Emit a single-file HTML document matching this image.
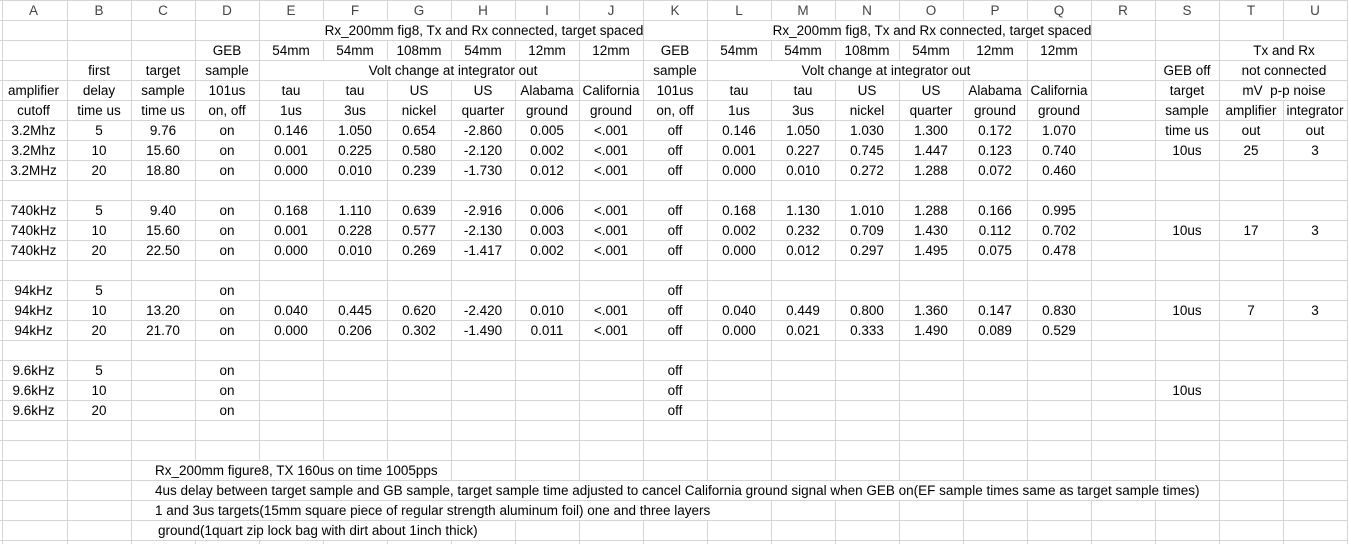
<!DOCTYPE html>
<html><head><meta charset="utf-8">
<style>
html,body{margin:0;padding:0;background:#fff;}
#s{position:relative;width:1351px;height:544px;overflow:hidden;font-family:"Liberation Sans",Arial,sans-serif;font-size:13.5px;color:#000;
background:
 linear-gradient(#fff,#fff) 1348px 0/10px 544px no-repeat,
 repeating-linear-gradient(to right,transparent 0 63px,#d4d4d4 63px 64px) 4px 0/1344px 544px no-repeat,
 repeating-linear-gradient(to bottom,#d4d4d4 0 1px,transparent 1px 20px) 0 0/1348px 544px no-repeat;}
.vl{position:absolute;left:2px;top:0;width:1px;height:544px;background:#d4d4d4}
.r{position:absolute;left:0;height:19px;line-height:20px;white-space:nowrap;display:flex}
.r i{font-style:normal;display:block;width:64px;text-align:center;flex:none}
.r i:first-child{width:67px}
.h i{color:#444}
.w{position:absolute;background:#fff;height:19px}
.t{position:absolute;line-height:20px;white-space:nowrap;height:19px}
</style></head><body><div id="s">
<div class="vl"></div>
<div class="w" style="left:322px;width:260px;top:21px"></div>
<div class="w" style="left:770px;width:260px;top:21px"></div>
<div class="w" style="left:1282px;width:3px;top:41px"></div>
<div class="w" style="left:322px;width:196px;top:61px"></div>
<div class="w" style="left:770px;width:196px;top:61px"></div>
<div class="w" style="left:1282px;width:3px;top:61px"></div>
<div class="w" style="left:1282px;width:3px;top:81px"></div>
<div class="w" style="left:133px;width:302px;top:461px"></div>
<div class="w" style="left:133px;width:1082px;top:481px"></div>
<div class="w" style="left:133px;width:596px;top:501px"></div>
<div class="w" style="left:133px;width:359px;top:521px"></div>

<div class="r h" style="top:1px"><i>A</i><i>B</i><i>C</i><i>D</i><i>E</i><i>F</i><i>G</i><i>H</i><i>I</i><i>J</i><i>K</i><i>L</i><i>M</i><i>N</i><i>O</i><i>P</i><i>Q</i><i>R</i><i>S</i><i>T</i><i>U</i></div>

<div class="t" style="left:324px;width:320px;text-align:center;top:21px">Rx_200mm fig8, Tx and Rx connected, target spaced</div>
<div class="t" style="left:772px;width:320px;text-align:center;top:21px">Rx_200mm fig8, Tx and Rx connected, target spaced</div>

<div class="r" style="top:41px"><i></i><i></i><i></i><i>GEB</i><i>54mm</i><i>54mm</i><i>108mm</i><i>54mm</i><i>12mm</i><i>12mm</i><i>GEB</i><i>54mm</i><i>54mm</i><i>108mm</i><i>54mm</i><i>12mm</i><i>12mm</i><i></i><i></i><i></i><i></i></div>
<div class="t" style="left:1220px;width:128px;text-align:center;top:41px">Tx and Rx</div>

<div class="r" style="top:61px"><i></i><i>first</i><i>target</i><i>sample</i><i></i><i></i><i></i><i></i><i></i><i></i><i>sample</i><i></i><i></i><i></i><i></i><i></i><i></i><i></i><i>GEB off</i><i></i><i></i></div>
<div class="t" style="left:353px;width:200px;text-align:center;top:61px">Volt change at integrator out</div>
<div class="t" style="left:786px;width:200px;text-align:center;top:61px">Volt change at integrator out</div>
<div class="t" style="left:1220px;width:128px;text-align:center;top:61px">not connected</div>

<div class="r" style="top:81px"><i>amplifier</i><i>delay</i><i>sample</i><i>101us</i><i>tau</i><i>tau</i><i>US</i><i>US</i><i>Alabama</i><i>California</i><i>101us</i><i>tau</i><i>tau</i><i>US</i><i>US</i><i>Alabama</i><i>California</i><i></i><i>target</i><i></i><i></i></div>
<div class="t" style="left:1220px;width:128px;text-align:center;top:81px">mV&nbsp; p-p noise</div>

<div class="r" style="top:101px"><i>cutoff</i><i>time us</i><i>time us</i><i>on, off</i><i>1us</i><i>3us</i><i>nickel</i><i>quarter</i><i>ground</i><i>ground</i><i>on, off</i><i>1us</i><i>3us</i><i>nickel</i><i>quarter</i><i>ground</i><i>ground</i><i></i><i>sample</i><i>amplifier</i><i>integrator</i></div>

<div class="r" style="top:121px"><i>3.2Mhz</i><i>5</i><i>9.76</i><i>on</i><i>0.146</i><i>1.050</i><i>0.654</i><i>-2.860</i><i>0.005</i><i>&lt;.001</i><i>off</i><i>0.146</i><i>1.050</i><i>1.030</i><i>1.300</i><i>0.172</i><i>1.070</i><i></i><i>time us</i><i>out</i><i>out</i></div>
<div class="r" style="top:141px"><i>3.2Mhz</i><i>10</i><i>15.60</i><i>on</i><i>0.001</i><i>0.225</i><i>0.580</i><i>-2.120</i><i>0.002</i><i>&lt;.001</i><i>off</i><i>0.001</i><i>0.227</i><i>0.745</i><i>1.447</i><i>0.123</i><i>0.740</i><i></i><i>10us</i><i>25</i><i>3</i></div>
<div class="r" style="top:161px"><i>3.2MHz</i><i>20</i><i>18.80</i><i>on</i><i>0.000</i><i>0.010</i><i>0.239</i><i>-1.730</i><i>0.012</i><i>&lt;.001</i><i>off</i><i>0.000</i><i>0.010</i><i>0.272</i><i>1.288</i><i>0.072</i><i>0.460</i><i></i><i></i><i></i><i></i></div>

<div class="r" style="top:201px"><i>740kHz</i><i>5</i><i>9.40</i><i>on</i><i>0.168</i><i>1.110</i><i>0.639</i><i>-2.916</i><i>0.006</i><i>&lt;.001</i><i>off</i><i>0.168</i><i>1.130</i><i>1.010</i><i>1.288</i><i>0.166</i><i>0.995</i><i></i><i></i><i></i><i></i></div>
<div class="r" style="top:221px"><i>740kHz</i><i>10</i><i>15.60</i><i>on</i><i>0.001</i><i>0.228</i><i>0.577</i><i>-2.130</i><i>0.003</i><i>&lt;.001</i><i>off</i><i>0.002</i><i>0.232</i><i>0.709</i><i>1.430</i><i>0.112</i><i>0.702</i><i></i><i>10us</i><i>17</i><i>3</i></div>
<div class="r" style="top:241px"><i>740kHz</i><i>20</i><i>22.50</i><i>on</i><i>0.000</i><i>0.010</i><i>0.269</i><i>-1.417</i><i>0.002</i><i>&lt;.001</i><i>off</i><i>0.000</i><i>0.012</i><i>0.297</i><i>1.495</i><i>0.075</i><i>0.478</i><i></i><i></i><i></i><i></i></div>

<div class="r" style="top:281px"><i>94kHz</i><i>5</i><i></i><i>on</i><i></i><i></i><i></i><i></i><i></i><i></i><i>off</i></div>
<div class="r" style="top:301px"><i>94kHz</i><i>10</i><i>13.20</i><i>on</i><i>0.040</i><i>0.445</i><i>0.620</i><i>-2.420</i><i>0.010</i><i>&lt;.001</i><i>off</i><i>0.040</i><i>0.449</i><i>0.800</i><i>1.360</i><i>0.147</i><i>0.830</i><i></i><i>10us</i><i>7</i><i>3</i></div>
<div class="r" style="top:321px"><i>94kHz</i><i>20</i><i>21.70</i><i>on</i><i>0.000</i><i>0.206</i><i>0.302</i><i>-1.490</i><i>0.011</i><i>&lt;.001</i><i>off</i><i>0.000</i><i>0.021</i><i>0.333</i><i>1.490</i><i>0.089</i><i>0.529</i><i></i><i></i><i></i><i></i></div>

<div class="r" style="top:361px"><i>9.6kHz</i><i>5</i><i></i><i>on</i><i></i><i></i><i></i><i></i><i></i><i></i><i>off</i></div>
<div class="r" style="top:381px"><i>9.6kHz</i><i>10</i><i></i><i>on</i><i></i><i></i><i></i><i></i><i></i><i></i><i>off</i><i></i><i></i><i></i><i></i><i></i><i></i><i></i><i>10us</i></div>
<div class="r" style="top:401px"><i>9.6kHz</i><i>20</i><i></i><i>on</i><i></i><i></i><i></i><i></i><i></i><i></i><i>off</i></div>

<div class="t" style="left:155px;top:461px">Rx_200mm figure8, TX 160us on time 1005pps</div>
<div class="t" style="left:155px;top:481px">4us delay between target sample and GB sample, target sample time adjusted to cancel California ground signal when GEB on(EF sample times same as target sample times)</div>
<div class="t" style="left:155px;top:501px">1 and 3us targets(15mm square piece of regular strength aluminum foil) one and three layers</div>
<div class="t" style="left:158px;top:521px">ground(1quart zip lock bag with dirt about 1inch thick)</div>
</div></body></html>
